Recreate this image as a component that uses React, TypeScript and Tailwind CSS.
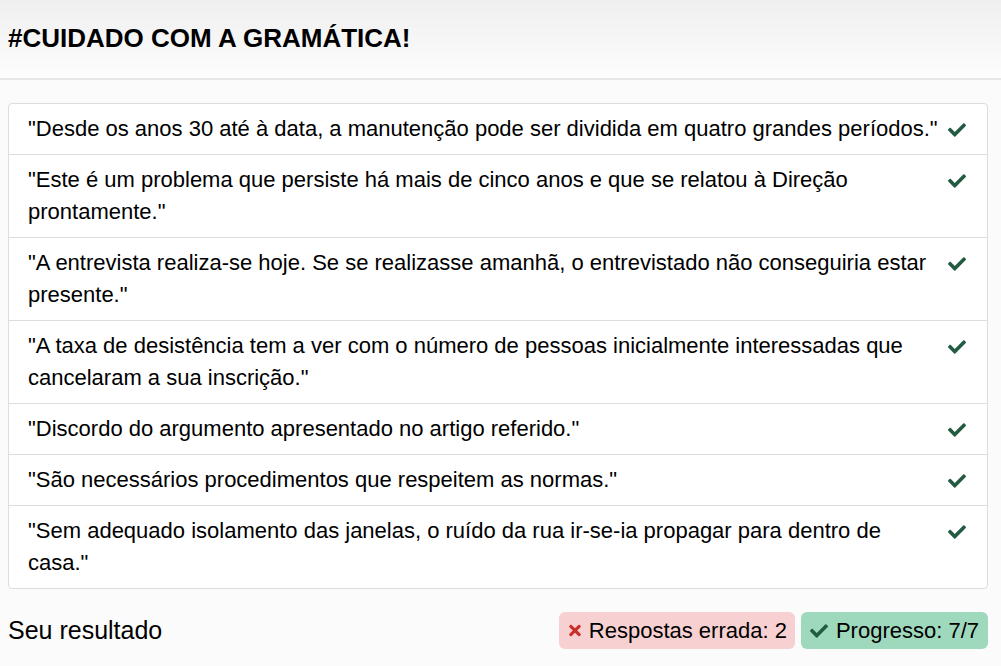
import React from 'react';
import { FaCheck, FaTimes } from 'react-icons/fa';

const frases = [
  '"Desde os anos 30 até à data, a manutenção pode ser dividida em quatro grandes períodos."',
  '"Este é um problema que persiste há mais de cinco anos e que se relatou à Direção prontamente."',
  '"A entrevista realiza-se hoje. Se se realizasse amanhã, o entrevistado não conseguiria estar presente."',
  '"A taxa de desistência tem a ver com o número de pessoas inicialmente interessadas que cancelaram a sua inscrição."',
  '"Discordo do argumento apresentado no artigo referido."',
  '"São necessários procedimentos que respeitem as normas."',
  '"Sem adequado isolamento das janelas, o ruído da rua ir-se-ia propagar para dentro de casa."',
];

const App = () => {
  return (
    <div className="min-h-[666px] bg-[#fbfbfb] text-black font-['Liberation_Sans',Arial,sans-serif]">
      <div className="h-[80px] flex items-center px-2 bg-gradient-to-b from-[#efefef] to-[#fdfdfd] border-b-2 border-[#e6e6e6]">
        <h1 className="text-[26px] font-bold leading-none -mt-[3px]">#CUIDADO COM A GRAMÁTICA!</h1>
      </div>

      <div className="pl-2 pr-[13px] pt-[23px]">
        <ul className="bg-white border border-[#dddddd] rounded-[4px]">
          {frases.map((f, i) => (
            <li
              key={i}
              className={`flex items-start pl-[19px] pr-[21px] py-[9px] text-[22px] leading-[32px] ${
                i > 0 ? 'border-t border-[#dddddd]' : ''
              }`}
            >
              <span className="flex-1">{f}</span>
              <FaCheck className="w-[18px] h-[18px] text-[#235b42] mt-[8px] ml-2 shrink-0" />
            </li>
          ))}
        </ul>

        <div className="flex items-center justify-between mt-[23px]">
          <span className="text-[25px]">Seu resultado</span>
          <div className="flex gap-[6px]">
            <span className="flex items-center gap-[6px] h-[37px] px-2 rounded-[6px] bg-[#f7d1d1] text-[22px]">
              <FaTimes className="w-[16px] h-[17px] text-[#c9302c]" />
              Respostas errada: 2
            </span>
            <span className="flex items-center gap-[8px] h-[37px] pl-[9px] pr-[9px] rounded-[6px] bg-[#9fd9bd] text-[22px]">
              <FaCheck className="w-[18px] h-[18px] text-[#235b42]" />
              Progresso: 7/7
            </span>
          </div>
        </div>
      </div>
    </div>
  );
};

export default App;
